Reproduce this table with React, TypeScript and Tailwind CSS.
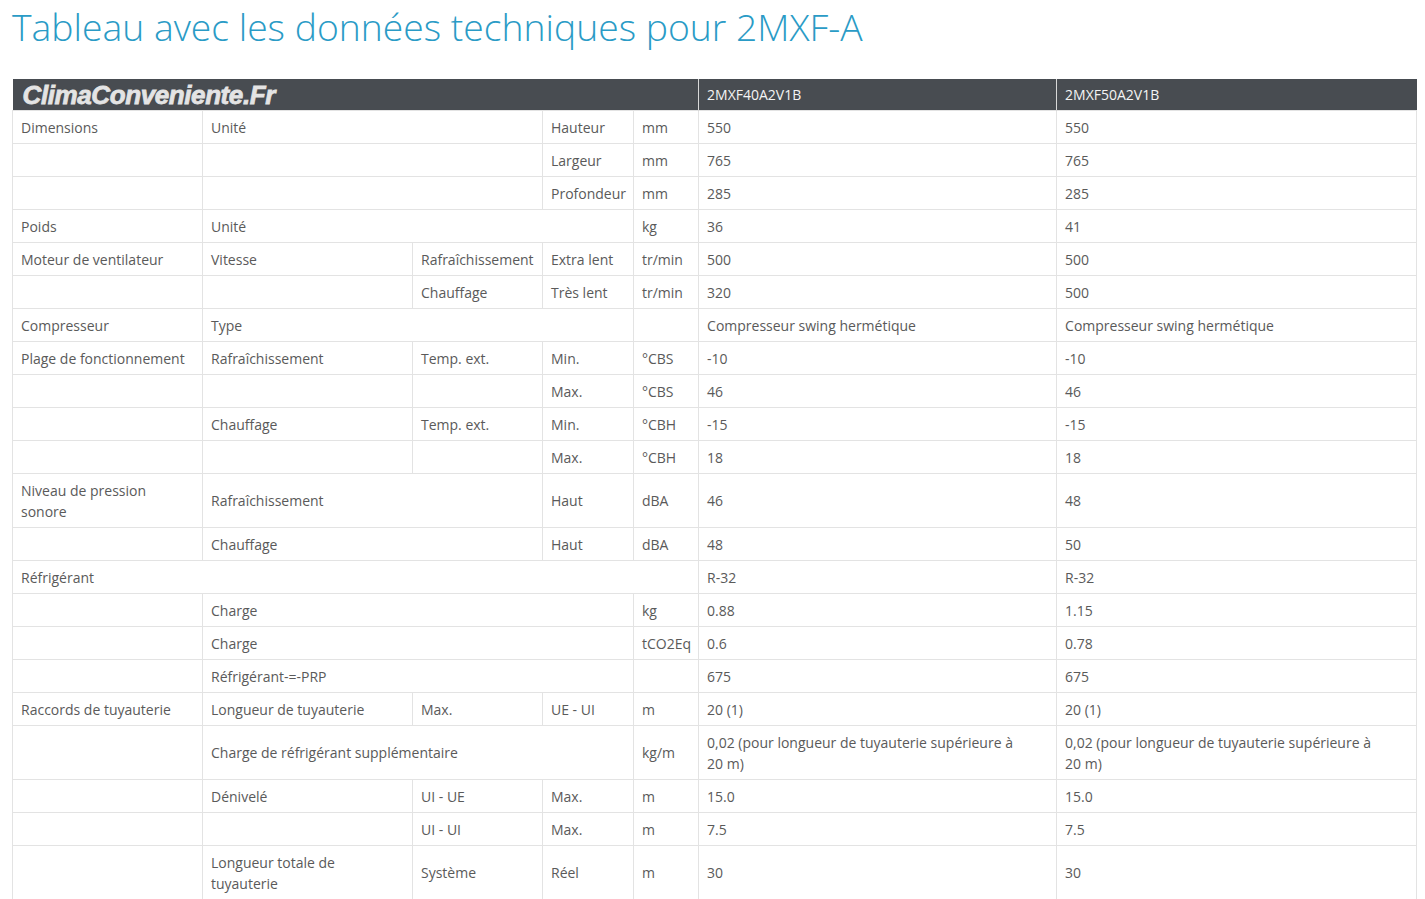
import React from "react";

type Cell = [string, number?];

const rows: Cell[][] = [
  [["Dimensions"], ["Unité", 2], ["Hauteur"], ["mm"], ["550"], ["550"]],
  [[""], ["", 2], ["Largeur"], ["mm"], ["765"], ["765"]],
  [[""], ["", 2], ["Profondeur"], ["mm"], ["285"], ["285"]],
  [["Poids"], ["Unité", 3], ["kg"], ["36"], ["41"]],
  [["Moteur de ventilateur"], ["Vitesse"], ["Rafraîchissement"], ["Extra lent"], ["tr/min"], ["500"], ["500"]],
  [[""], [""], ["Chauffage"], ["Très lent"], ["tr/min"], ["320"], ["500"]],
  [["Compresseur"], ["Type", 3], [""], ["Compresseur swing hermétique"], ["Compresseur swing hermétique"]],
  [["Plage de fonctionnement"], ["Rafraîchissement"], ["Temp. ext."], ["Min."], ["°CBS"], ["-10"], ["-10"]],
  [[""], [""], [""], ["Max."], ["°CBS"], ["46"], ["46"]],
  [[""], ["Chauffage"], ["Temp. ext."], ["Min."], ["°CBH"], ["-15"], ["-15"]],
  [[""], [""], [""], ["Max."], ["°CBH"], ["18"], ["18"]],
  [["Niveau de pression sonore"], ["Rafraîchissement", 2], ["Haut"], ["dBA"], ["46"], ["48"]],
  [[""], ["Chauffage", 2], ["Haut"], ["dBA"], ["48"], ["50"]],
  [["Réfrigérant", 5], ["R-32"], ["R-32"]],
  [[""], ["Charge", 3], ["kg"], ["0.88"], ["1.15"]],
  [[""], ["Charge", 3], ["tCO2Eq"], ["0.6"], ["0.78"]],
  [[""], ["Réfrigérant-=-PRP", 3], [""], ["675"], ["675"]],
  [["Raccords de tuyauterie"], ["Longueur de tuyauterie"], ["Max."], ["UE - UI"], ["m"], ["20 (1)"], ["20 (1)"]],
  [
    [""],
    ["Charge de réfrigérant supplémentaire", 3],
    ["kg/m"],
    ["0,02 (pour longueur de tuyauterie supérieure à 20 m)"],
    ["0,02 (pour longueur de tuyauterie supérieure à 20 m)"],
  ],
  [[""], ["Dénivelé"], ["UI - UE"], ["Max."], ["m"], ["15.0"], ["15.0"]],
  [[""], [""], ["UI - UI"], ["Max."], ["m"], ["7.5"], ["7.5"]],
  [[""], ["Longueur totale de tuyauterie"], ["Système"], ["Réel"], ["m"], ["30"], ["30"]],
];

export default function App() {
  return (
    <div className="min-h-screen bg-white font-['Open_Sans',sans-serif] text-[#5a5a5a]">
      <h1 className="pl-[12px] pt-[5px] text-[37.3px] leading-[43px] font-light text-[#2a9bc6]">
        Tableau avec les données techniques pour 2MXF-A
      </h1>
      <table className="mt-[31px] ml-[12px] w-[1404px] table-fixed border-collapse text-[14px] leading-[21px]">
        <colgroup>
          <col className="w-[190px]" />
          <col className="w-[210px]" />
          <col className="w-[130px]" />
          <col className="w-[91px]" />
          <col className="w-[65px]" />
          <col className="w-[358px]" />
          <col className="w-[360px]" />
        </colgroup>
        <thead>
          <tr className="bg-[#484c51] h-[31px]">
            <th colSpan={5} className="p-0 pl-[10px] text-left align-middle">
              <span className="block font-['Liberation_Sans',Arial,sans-serif] text-[26px] leading-[28px] pt-[2px] font-bold italic tracking-[-0.4px] text-[#e4e4e4] [-webkit-text-stroke:0.8px_#e4e4e4]">
                ClimaConveniente.Fr
              </span>
            </th>
            <th className="border-l border-[#d8d8d8] px-[8px] text-left font-normal text-[14px] text-[#f4f4f4] align-middle">
              2MXF40A2V1B
            </th>
            <th className="border-l border-[#d8d8d8] px-[8px] text-left font-normal text-[14px] text-[#f4f4f4] align-middle">
              2MXF50A2V1B
            </th>
          </tr>
        </thead>
        <tbody>
          {rows.map((r, i) => (
            <tr key={i}>
              {r.map((c, j) => {
                const isValue = j >= r.length - 2;
                return (
                  <td
                    key={j}
                    colSpan={c[1] ?? 1}
                    className={
                      isValue
                        ? "border border-[#e3e3e3] pl-[8px] pr-[30px] pt-[6px] pb-[5px] align-middle"
                        : "border border-[#e3e3e3] px-[8px] pt-[6px] pb-[5px] align-middle"
                    }
                  >
                    {c[0]}
                  </td>
                );
              })}
            </tr>
          ))}
        </tbody>
      </table>
    </div>
  );
}
